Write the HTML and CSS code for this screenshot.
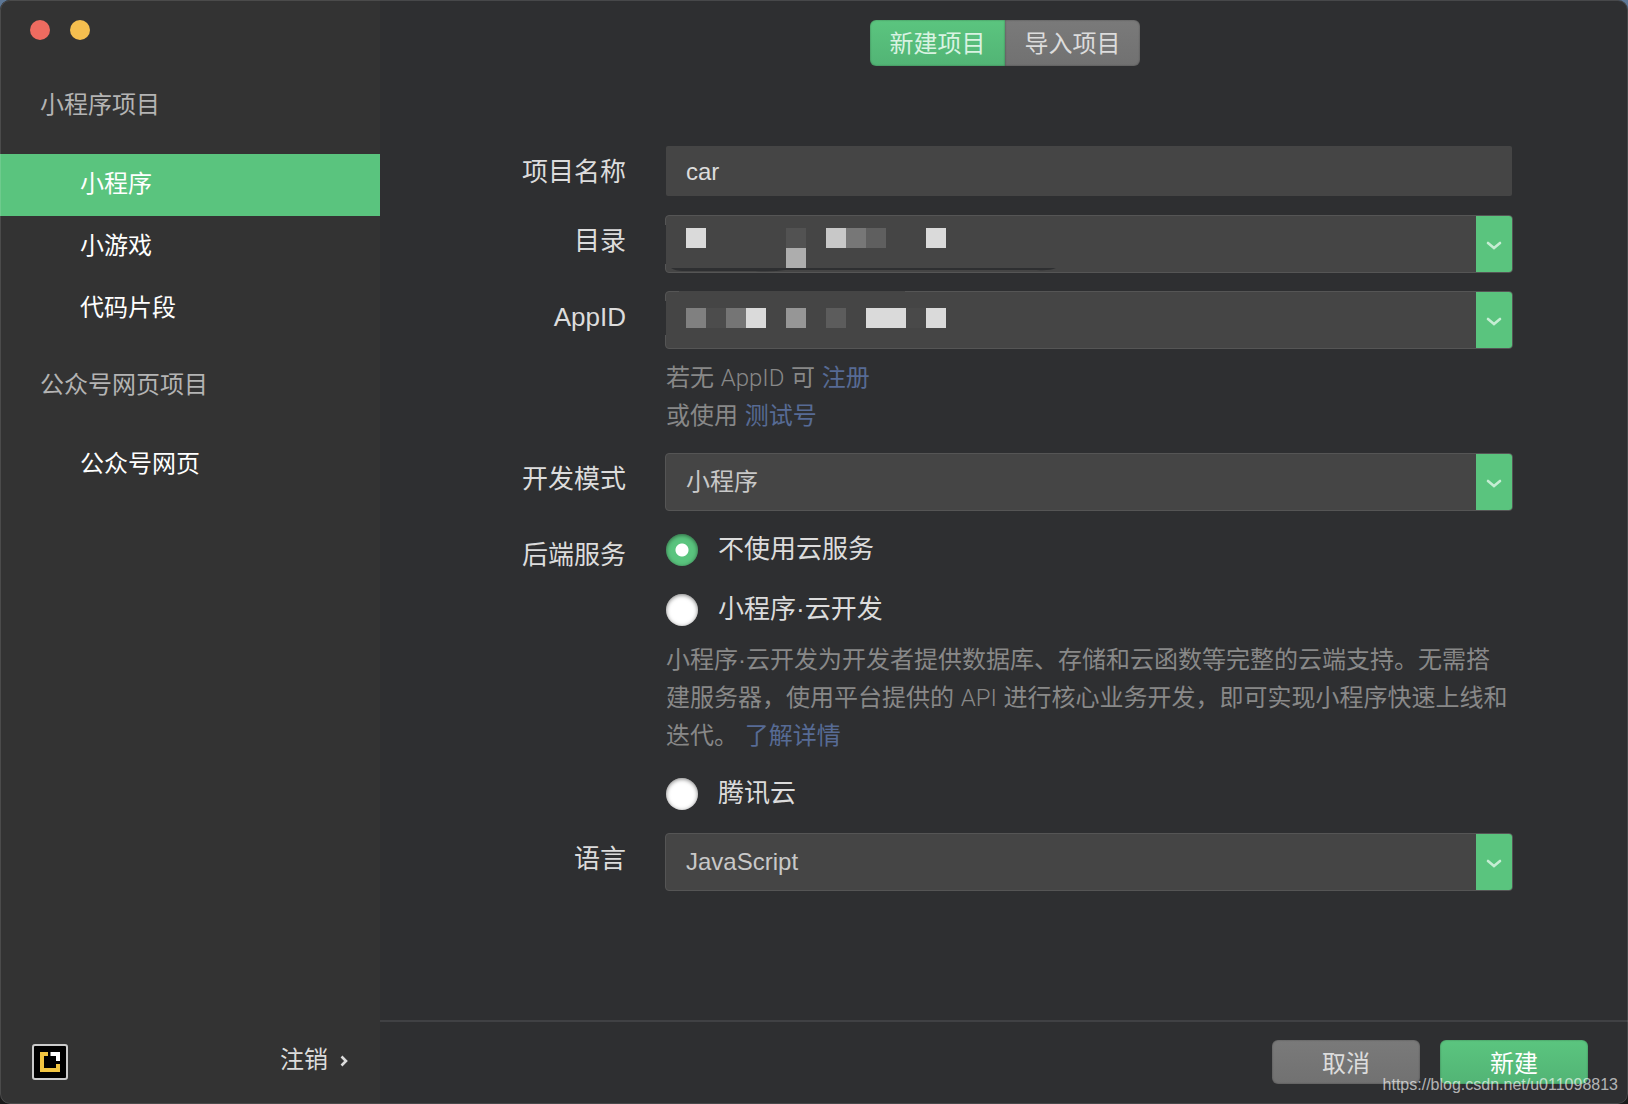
FILE: index.html
```html
<!DOCTYPE html>
<html lang="zh-CN">
<head>
<meta charset="utf-8">
<title>新建项目</title>
<link rel="stylesheet" href="styles.css">
</head>
<body>
<div class="window">
  <aside class="sidebar">
    <div class="lights">
      <button class="light light-close" type="button" aria-label="关闭"></button>
      <button class="light light-min" type="button" aria-label="最小化"></button>
    </div>
    <nav class="nav">
      <h2 class="nav-title">小程序项目</h2>
      <a class="nav-item active" href="#mini">小程序</a>
      <a class="nav-item" href="#game">小游戏</a>
      <a class="nav-item" href="#snippet">代码片段</a>
      <h2 class="nav-title">公众号网页项目</h2>
      <a class="nav-item" href="#web">公众号网页</a>
    </nav>
    <div class="account">
      <svg class="avatar" width="36" height="36" viewBox="0 0 36 36" aria-hidden="true">
        <rect x="1" y="1" width="34" height="34" rx="2" fill="#000" stroke="#cbcbcb" stroke-width="2"/>
        <path d="M16 10H10V26H26V20" fill="none" stroke="#f2c541" stroke-width="4"/>
        <path d="M18.500 10H26V17" fill="none" stroke="#fff" stroke-width="4"/>
      </svg>
      <button class="logout" type="button">注销
        <svg width="8" height="14" viewBox="0 0 8 14" aria-hidden="true"><path d="M1.500 1.500L6 6L1.500 10.500" fill="none" stroke="#dcdcdc" stroke-width="2.600"/></svg>
      </button>
    </div>
  </aside>

  <main class="main">
    <div class="tabs">
      <button class="tab tab-on" type="button">新建项目</button>
      <button class="tab" type="button">导入项目</button>
    </div>

    <form class="form" id="project">
      <div class="row">
        <label class="label" for="name">项目名称</label>
        <input class="text" id="name" type="text" value="car">
      </div>
      <div class="row">
        <label class="label" for="dir">目录</label>
        <div class="combo">
          <select class="select" id="dir"></select>
          <svg class="mosaic" width="400" height="58" viewBox="0 0 400 58" aria-hidden="true">
            <path d="M0 10h1v39H0z" fill="#2e2f31"/>
            <path d="M6 53H391Q384 56 372 55H120Q108 57 90 56H18Q10 56 6 53z" fill="#2e2f31"/>
            <path d="M21 13h20v20H21zM261 13h20v20h-20z" fill="#dadada"/>
            <path d="M121 13h20v20h-20z" fill="#525252"/>
            <path d="M121 33h20v20h-20z" fill="#adadad"/>
            <path d="M161 13h20v20h-20z" fill="#c8c8c8"/>
            <path d="M181 13h20v20h-20z" fill="#777"/>
            <path d="M201 13h20v20h-20z" fill="#5f5f5f"/>
          </svg>
          <svg class="arrow" viewBox="0 0 36 56" aria-hidden="true"><path d="M12 27L18 32L24 27"/></svg>
        </div>
      </div>
      <div class="row">
        <label class="label" for="appid">AppID</label>
        <div class="field">
          <div class="combo">
            <select class="select" id="appid"></select>
            <svg class="mosaic" width="400" height="58" viewBox="0 0 400 58" aria-hidden="true">
              <path d="M0 10h1v34H0z" fill="#2e2f31"/>
              <path d="M14 0H240V1H14z" fill="#454545"/>
              <path d="M21 17h20v20H21z" fill="#808080"/>
              <path d="M41 17h20v20H41z" fill="#4c4c4c"/>
              <path d="M61 17h20v20H61z" fill="#757575"/>
              <path d="M81 17h20v20H81zM201 17h40v20h-40zM261 17h20v20h-20z" fill="#dadada"/>
              <path d="M121 17h20v20h-20z" fill="#969696"/>
              <path d="M161 17h20v20h-20z" fill="#5c5c5c"/>
              <path d="M241 17h20v20h-20z" fill="#494949"/>
            </svg>
            <svg class="arrow" viewBox="0 0 36 56" aria-hidden="true"><path d="M12 27L18 32L24 27"/></svg>
          </div>
          <p class="hint">若无 <span class="latin">AppID</span> 可 <a href="#register">注册</a><br>或使用 <a href="#test">测试号</a></p>
        </div>
      </div>
      <div class="row">
        <label class="label" for="mode">开发模式</label>
        <div class="combo">
          <select class="select" id="mode"><option>小程序</option></select>
          <svg class="arrow" viewBox="0 0 36 56" aria-hidden="true"><path d="M12 27L18 32L24 27"/></svg>
        </div>
      </div>
      <div class="row" role="radiogroup" aria-labelledby="backend">
        <span class="label" id="backend">后端服务</span>
        <div class="choices">
          <label class="choice"><input class="radio" type="radio" name="backend" checked><span>不使用云服务</span></label>
          <label class="choice"><input class="radio" type="radio" name="backend"><span>小程序·云开发</span></label>
          <p class="hint">小程序·云开发为开发者提供数据库、存储和云函数等完整的云端支持。无需搭建服务器，使用平台提供的 <span class="latin">API</span> 进行核心业务开发，即可实现小程序快速上线和迭代。 <a href="#more">了解详情</a></p>
          <label class="choice"><input class="radio" type="radio" name="backend"><span>腾讯云</span></label>
        </div>
      </div>
      <div class="row">
        <label class="label" for="lang">语言</label>
        <div class="combo">
          <select class="select" id="lang"><option>JavaScript</option></select>
          <svg class="arrow" viewBox="0 0 36 56" aria-hidden="true"><path d="M12 27L18 32L24 27"/></svg>
        </div>
      </div>
    </form>

    <footer class="footer">
      <button class="btn" type="button">取消</button>
      <button class="btn btn-primary" type="submit" form="project">新建</button>
    </footer>
  </main>
  <span class="watermark">https://blog.csdn.net/u011098813</span>
</div>
</body>
</html>
```
FILE: styles.css
```css
* { box-sizing: border-box; }

body {
  margin: 0;
  background: linear-gradient(#5d7796, #1a1a1a 80%);
  color: #dcdcdc;
  font: 24px/34px "Liberation Sans", "Noto Sans CJK SC", sans-serif;
}

button, input, select { font: inherit; color: inherit; margin: 0; }
a { text-decoration: none; }

.window {
  position: relative;
  display: flex;
  min-height: 100vh;
  border-radius: 10px;
  overflow: hidden;
  background: #2e2f31;
}

.window::after {
  content: "";
  position: absolute;
  inset: 0;
  border: 1px solid rgba(255, 255, 255, 0.12);
  border-radius: 10px;
  pointer-events: none;
}

.sidebar {
  display: flex;
  flex-direction: column;
  flex: none;
  width: 380px;
  background: #333;
}

.lights { display: flex; gap: 20px; height: 60px; padding: 20px 30px; }
.light { width: 20px; height: 20px; padding: 0; border: 0; border-radius: 50%; }
.light-close { background: #ee6b60; }
.light-min { background: #f5bf4f; }

.nav-title {
  margin: 0;
  padding: 28px 40px 32px;
  font-size: 24px;
  font-weight: 400;
  color: #b4b4b4;
}

.nav-item { display: block; padding: 13px 80px 15px; color: #fff; }
.nav-item.active { background: #5ac47e; }

.account {
  display: flex;
  align-items: center;
  justify-content: space-between;
  margin-top: auto;
  padding: 0 32px 24px;
}

.avatar { display: block; }

.logout {
  display: flex;
  align-items: center;
  gap: 12px;
  height: 36px;
  padding: 0 0 4px;
  border: 0;
  background: none;
}

.logout svg { margin-top: 4px; }

.main { display: flex; flex-direction: column; flex: 1; min-width: 0; }

.tabs { display: flex; justify-content: center; padding: 20px 0 80px 2px; }

.tab {
  width: 135px;
  height: 46px;
  padding: 2px 0 0;
  border: 0;
  border-radius: 0 6px 6px 0;
  background: linear-gradient(#7a7a7a, #717171);
  box-shadow: inset 0 0 2px rgba(0, 0, 0, 0.4);
}

.tab-on {
  border-radius: 6px 0 0 6px;
  background: linear-gradient(#5bc57f, #52b475);
  color: #d9f3e2;
}

.form { display: grid; gap: 18px; padding: 0 115px 60px; }

.row {
  display: grid;
  grid-template-columns: 131px minmax(0, 1fr);
  column-gap: 39px;
  align-items: start;
}

.label { padding-top: 2px; font-size: 26px; line-height: 48px; text-align: right; }

.text {
  height: 50px;
  margin: 0 1px 1px;
  padding: 2px 20px 0;
  border: 0;
  border-radius: 2px;
  background: #454545;
}

.combo { position: relative; }

.select {
  display: block;
  width: 100%;
  height: 58px;
  padding: 0 56px 0 20px;
  appearance: none;
  border: 1px solid #555;
  border-radius: 4px;
  background: #454545;
  color: #c8c8c8;
}

.mosaic { position: absolute; left: 0; top: 0; pointer-events: none; }

.arrow {
  position: absolute;
  right: 1px;
  top: 1px;
  width: 36px;
  height: 56px;
  border-radius: 0 3px 3px 0;
  background: #5ac47e;
  fill: none;
  stroke: #c5edd3;
  stroke-width: 2.6;
  stroke-linecap: round;
  pointer-events: none;
}

.hint {
  margin: 0;
  padding: 10px 4px 0 1px;
  line-height: 38px;
  color: #888;
}

.hint a { color: #576b95; }
.latin { font-family: Roboto, sans-serif; font-weight: 300; }

.choices { margin: -9px 0; }
.choices .hint { padding-top: 1px; padding-bottom: 9px; }

.choice {
  display: flex;
  align-items: center;
  gap: 20px;
  height: 60px;
  padding-left: 1px;
  font-size: 26px;
}

.choice span { padding-bottom: 2px; }

.radio {
  appearance: none;
  width: 32px;
  height: 32px;
  border-radius: 50%;
  background: #fff;
  box-shadow: inset 0 1px 4px rgba(0, 0, 0, 0.5);
}

.radio:checked { background: radial-gradient(circle, #fff 6px, #5ac47e 7px); }

.footer {
  display: flex;
  justify-content: flex-end;
  gap: 20px;
  margin-top: auto;
  padding: 18px 40px 20px;
  border-top: 2px solid #404144;
}

.btn {
  width: 148px;
  height: 44px;
  padding: 4px 0 0;
  border: 0;
  border-radius: 6px;
  background: linear-gradient(#7a7a7a, #717171);
  box-shadow: inset 0 0 2px rgba(0, 0, 0, 0.4);
}

.btn-primary { background: linear-gradient(#5bc57f, #52b475); color: #fff; }

.watermark {
  position: absolute;
  right: 10px;
  bottom: 10px;
  font-size: 16px;
  line-height: 18px;
  color: rgba(255, 255, 255, 0.65);
}
```
